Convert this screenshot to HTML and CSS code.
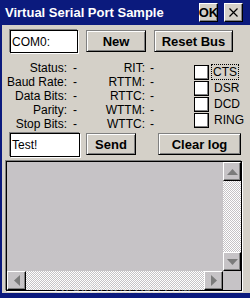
FILE: index.html
```html
<!DOCTYPE html>
<html>
<head>
<meta charset="utf-8">
<link rel="stylesheet" href="styles.css">
</head>
<body>
<div class="window">
  <div class="titlebar">
    <span class="title">Virtual Serial Port Sample</span>
    <span class="tb-btn ok">OK</span>
    <span class="tb-btn close"><svg width="9" height="9" viewBox="0 0 9 9"><path d="M0.5 0.5L8.5 8.5M8.5 0.5L0.5 8.5" stroke="#000" stroke-width="1.2" fill="none"/></svg></span>
  </div>
  <div class="client">
    <div class="row row1">
      <div class="edit edit1">COM0:</div>
      <div class="btn btn-new">New</div>
      <div class="btn btn-reset">Reset Bus</div>
    </div>
    <div class="info">
      <div class="col col-a">
        <div class="line"><span class="lbl">Status:</span><span class="val">-</span></div>
        <div class="line"><span class="lbl">Baud Rate:</span><span class="val">-</span></div>
        <div class="line"><span class="lbl">Data Bits:</span><span class="val">-</span></div>
        <div class="line"><span class="lbl">Parity:</span><span class="val">-</span></div>
        <div class="line"><span class="lbl">Stop Bits:</span><span class="val">-</span></div>
      </div>
      <div class="col col-b">
        <div class="line"><span class="lbl">RIT:</span><span class="val">-</span></div>
        <div class="line"><span class="lbl">RTTM:</span><span class="val">-</span></div>
        <div class="line"><span class="lbl">RTTC:</span><span class="val">-</span></div>
        <div class="line"><span class="lbl">WTTM:</span><span class="val tight">-</span></div>
        <div class="line"><span class="lbl">WTTC:</span><span class="val">-</span></div>
      </div>
      <div class="col checks">
        <div class="check"><span class="box"></span><span class="ctext focus">CTS</span></div>
        <div class="check"><span class="box"></span><span class="ctext">DSR</span></div>
        <div class="check"><span class="box"></span><span class="ctext">DCD</span></div>
        <div class="check"><span class="box"></span><span class="ctext">RING</span></div>
      </div>
    </div>
    <div class="row row3">
      <div class="edit edit2">Test!</div>
      <div class="btn btn-send">Send</div>
      <div class="btn btn-clear">Clear log</div>
    </div>
    <div class="log">
      <div class="log-area"></div>
      <div class="vscroll">
        <div class="sbtn"><svg width="11" height="6" viewBox="0 0 11 6"><path d="M5.5 0L11 6H0Z" fill="#7b7b7b"/></svg></div>
        <div class="track"></div>
        <div class="sbtn"><svg width="11" height="6" viewBox="0 0 11 6"><path d="M0 0H11L5.5 6Z" fill="#7b7b7b"/></svg></div>
      </div>
      <div class="hscroll">
        <div class="sbtn"><svg width="6" height="11" viewBox="0 0 6 11"><path d="M6 0V11L0 5.5Z" fill="#7b7b7b"/></svg></div>
        <div class="track"></div>
        <div class="sbtn"><svg width="6" height="11" viewBox="0 0 6 11"><path d="M0 0L6 5.5L0 11Z" fill="#7b7b7b"/></svg></div>
      </div>
      <div class="corner"></div>
    </div>
  </div>
  <div class="watermark">GearDownload.com</div>
</div>
</body>
</html>
```

FILE: styles.css
```css
body {
  margin: 0;
  font-family: "Liberation Sans", Arial, sans-serif;
  font-size: 12px;
  color: #000;
}

.window {
  position: relative;
  width: 250px;
  height: 298px;
  box-sizing: border-box;
  display: flex;
  flex-direction: column;
  background: #0b1a7d;
  overflow: hidden;
}

.titlebar {
  height: 25px;
  flex: none;
  display: flex;
  align-items: center;
  padding-left: 5px;
  padding-right: 7px;
  color: #fff;
}

.title {
  flex: 1;
  font-weight: bold;
  font-size: 13px;
  white-space: nowrap;
}

.tb-btn {
  width: 19px;
  height: 19px;
  box-sizing: border-box;
  background: #d4d0c8;
  border: 1px solid;
  border-color: #fff #000 #000 #fff;
  box-shadow: inset -1px -1px 0 #808080;
  display: flex;
  align-items: center;
  justify-content: center;
  color: #000;
  font-weight: bold;
  font-size: 13px;
}

.ok {
  margin-right: 6px;
}

.client {
  flex: 1;
  margin: 0 0 5px 2px;
  background: #d4d0c8;
  display: flex;
  flex-direction: column;
}

.row {
  display: flex;
  align-items: flex-start;
  padding-left: 8px;
}

.row1 {
  margin-top: 5px;
}

.edit {
  background: #fff;
  border: 1px solid #000;
  box-shadow: -1px -1px 0 #808080, 1px 1px 0 #fff;
  box-sizing: border-box;
  height: 23px;
  display: flex;
  align-items: center;
  padding-left: 1px;
}

.edit1 {
  width: 68px;
}

.edit2 {
  width: 70px;
  height: 24px;
}

.btn {
  box-sizing: border-box;
  height: 22px;
  background: #d4d0c8;
  border: 1px solid;
  border-color: #808080 #000 #000 #808080;
  box-shadow: inset 1px 1px 0 #fff, inset -1px -1px 0 #808080;
  display: flex;
  align-items: center;
  justify-content: center;
  font-weight: bold;
  font-size: 13px;
}

.btn-new {
  margin-left: 8px;
  width: 60px;
}

.btn-reset {
  margin-left: 8px;
  width: 79px;
}

.btn-send {
  margin-left: 6px;
  width: 50px;
}

.btn-clear {
  margin-left: 22px;
  width: 83px;
}

.info {
  display: flex;
  margin-top: 8px;
  height: 70px;
}

.col {
  display: flex;
  flex-direction: column;
}

.line {
  display: flex;
  height: 14px;
  line-height: 14px;
  white-space: nowrap;
}

.col-a {
  width: 75px;
}

.col-a .lbl {
  width: 65px;
  text-align: right;
}

.col-b {
  width: 77px;
}

.col-b .lbl {
  width: 68px;
  text-align: right;
}

.val {
  margin-left: 6px;
}

.col-b .val {
  margin-left: 5px;
}

.checks {
  margin-left: 40px;
  padding-top: 3px;
}

.check {
  display: flex;
  align-items: center;
  height: 16px;
}

.box {
  width: 15px;
  height: 15px;
  box-sizing: border-box;
  background: #fff;
  border: 1px solid #000;
  box-shadow: -1px -1px 0 #808080 inset;
}

.ctext {
  margin-left: 4px;
  line-height: 14px;
  padding: 0 1px;
}

.focus {
  outline: 1px dotted #000;
  margin-left: 3px;
}

.row3 {
  margin-top: 2px;
}

.log {
  margin-top: 4px;
  margin-left: 4px;
  width: 236px;
  height: 130px;
  box-sizing: border-box;
  border: 1px solid #000;
  box-shadow: -1px -1px 0 #808080, 1px 1px 0 #fff;
  display: grid;
  grid-template-columns: 1fr 18px;
  grid-template-rows: 1fr 19px;
}

.log-area {
  background: #c6c3c6;
}

.vscroll {
  display: flex;
  flex-direction: column;
}

.hscroll {
  display: flex;
}

.track {
  flex: 1;
  background: repeating-conic-gradient(#fff 0 25%, #c6c3c6 0 50%) 0 0 / 2px 2px;
}

.sbtn {
  flex: none;
  box-sizing: border-box;
  background: #c6c3c6;
  border: 1px solid;
  border-color: #fff #000 #000 #fff;
  box-shadow: inset -1px -1px 0 #808080;
  display: flex;
  align-items: center;
  justify-content: center;
}

.vscroll .sbtn {
  height: 19px;
}

.hscroll .sbtn {
  width: 19px;
}

.corner {
  background: #c6c3c6;
}

.watermark {
  position: absolute;
  left: 54px;
  top: 280px;
  font-family: "Liberation Serif", serif;
  font-variant: small-caps;
  font-size: 15px;
  letter-spacing: 0.5px;
  color: rgba(235, 235, 235, 0.55);
  white-space: nowrap;
}
```
